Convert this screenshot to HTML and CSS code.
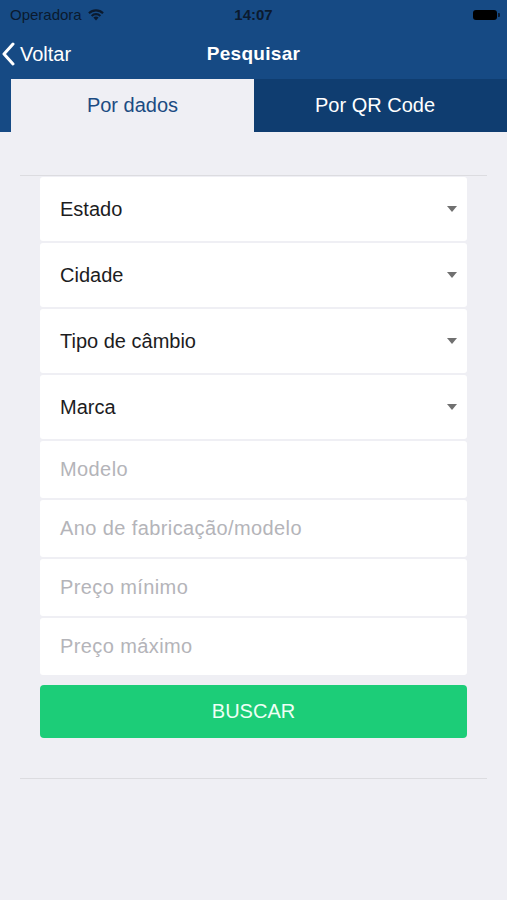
FILE: index.html
```html
<!DOCTYPE html>
<html lang="pt-BR">
<head>
<meta charset="UTF-8">
<meta name="viewport" content="width=device-width, initial-scale=1.0">
<title>Pesquisar</title>
<link rel="stylesheet" href="styles.css">
</head>
<body>
<header class="top">
<div class="status-bar">
<div class="status-left">
<span>Operadora</span>
<svg class="wifi" width="18" height="13" viewBox="0 0 18 13">
<path d="M9 12.5 L6.4 9.6 A3.8 3.8 0 0 1 11.6 9.6 Z" fill="#0b1a2e"/>
<path d="M3.9 7.2 A7.3 7.3 0 0 1 14.1 7.2 L12.6 8.8 A5.2 5.2 0 0 0 5.4 8.8 Z" fill="#0b1a2e"/>
<path d="M1.2 4.4 A11 11 0 0 1 16.8 4.4 L15.3 6 A8.9 8.9 0 0 0 2.7 6 Z" fill="#0b1a2e"/>
</svg>
</div>
<span class="status-time">14:07</span>
<div class="status-right">
<span class="battery"></span>
</div>
</div>
<nav class="nav-bar">
<a class="back" href="#">
<svg width="14" height="24" viewBox="0 0 14 24">
<path d="M12 2 L3 12 L12 22" fill="none" stroke="#fff" stroke-width="3" stroke-linecap="round" stroke-linejoin="round"/>
</svg>
<span>Voltar</span>
</a>
<h1 class="nav-title">Pesquisar</h1>
</nav>
<div class="tabs">
<div class="tab active">Por dados</div>
<div class="tab">Por QR Code</div>
</div>
</header>

<main class="content">
<hr class="divider">
<form class="search-form">
<div class="fields">
<div class="field select">Estado<span class="caret"></span></div>
<div class="field select">Cidade<span class="caret"></span></div>
<div class="field select">Tipo de câmbio<span class="caret"></span></div>
<div class="field select">Marca<span class="caret"></span></div>
<div class="field text">Modelo</div>
<div class="field text">Ano de fabricação/modelo</div>
<div class="field text">Preço mínimo</div>
<div class="field text">Preço máximo</div>
</div>
<button type="button" class="btn-search">BUSCAR</button>
</form>
<hr class="divider bottom">
</main>
</body>
</html>
```

FILE: styles.css
```css
body {
margin: 0;
font-family: "Liberation Sans", Arial, sans-serif;
background-color: #efeff4;
}
.top {
background-color: #164a84;
}
.status-bar {
height: 29px;
display: flex;
align-items: center;
justify-content: space-between;
padding: 0 10px;
color: #0b1a2e;
font-size: 15px;
}
.status-left {
display: flex;
align-items: center;
gap: 5px;
width: 120px;
}
.status-time {
font-weight: bold;
font-size: 15px;
}
.status-right {
width: 120px;
display: flex;
justify-content: flex-end;
}
.battery {
display: block;
width: 24px;
height: 10px;
background-color: #000;
border-radius: 3px;
position: relative;
}
.battery::after {
content: "";
position: absolute;
right: -3px;
top: 3px;
width: 2px;
height: 4px;
background-color: #0b1a2e;
border-radius: 0 1px 1px 0;
}
.nav-bar {
height: 50px;
display: flex;
align-items: center;
justify-content: center;
position: relative;
}
.back {
position: absolute;
left: 0;
top: 0;
bottom: 0;
display: flex;
align-items: center;
gap: 5px;
padding-left: 1px;
color: #fff;
text-decoration: none;
font-size: 20px;
}
.nav-title {
margin: 0;
color: #fff;
font-size: 19px;
font-weight: bold;
letter-spacing: 0.3px;
}
.tabs {
display: flex;
padding-left: 11px;
}
.tab {
flex: 1;
height: 53px;
display: flex;
align-items: center;
justify-content: center;
padding-right: 11px;
font-size: 20px;
color: #fff;
background-color: #0f3d70;
}
.tab.active {
flex: 0 0 243px;
padding-right: 0;
background-color: #efeff4;
color: #1b4b82;
}
.content {
padding: 43px 20px 0;
}
.divider {
margin: 0;
border: none;
border-top: 1px solid #dcdce0;
}
.divider.bottom {
margin-top: 40px;
}
.search-form {
padding: 1px 20px 0;
}
.fields {
display: flex;
flex-direction: column;
gap: 2px;
}
.field {
background-color: #fff;
display: flex;
align-items: center;
justify-content: space-between;
padding: 0 10px 0 20px;
font-size: 20px;
border-radius: 3px;
}
.field.select {
height: 64px;
color: #1c1c1e;
}
.field.text {
height: 57px;
color: #b4b4b9;
letter-spacing: 0.4px;
}
.caret {
width: 0;
height: 0;
border-left: 5px solid transparent;
border-right: 5px solid transparent;
border-top: 6px solid #707070;
}
.btn-search {
display: block;
width: 100%;
height: 53px;
margin-top: 10px;
border: none;
border-radius: 4px;
background-color: #1ccd78;
color: #eefff5;
font-family: "Liberation Sans", Arial, sans-serif;
font-size: 20px;
}
```
